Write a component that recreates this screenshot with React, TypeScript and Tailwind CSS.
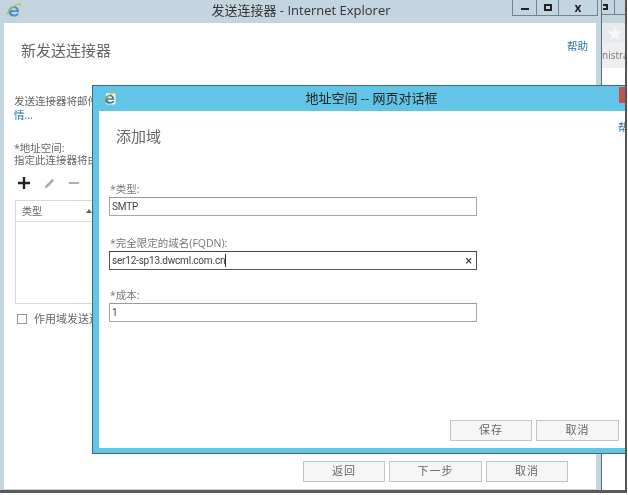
import React from "react";

const cjk = "font-['Open_Sans','Noto_Sans_CJK_SC',sans-serif]";

function IeIcon({ className, white }: { className?: string; white?: boolean }) {
  return (
    <svg viewBox="0 0 20 20" className={className}>
      {white ? <rect x="5" y="3" width="13" height="15" rx="2" fill="#f4f8ec" /> : null}
      <path d="M4 11.5c0-4 3-6.5 6.5-6.5s6 2.5 6 6.8H7.4c.2 2 1.6 3 3.4 3 1.3 0 2.4-.5 3.2-1.4h2.6c-1.100 2.400-3.300 3.700-5.900 3.700-3.800 0-6.700-2.300-6.700-5.600zM7.400 9.800h6.200c-.2-1.700-1.400-2.700-3.100-2.700S7.700 8.100 7.400 9.800z" fill={white ? "#3f7f98" : "#3d93c9"} />
      <path d="M2 15c2-5 8-11 14-13 1.800-.5 2.500.8 1.800 2.500" fill="none" stroke="#c9b64a" strokeWidth="1.400" />
    </svg>
  );
}

function Btn({ label, w }: { label: string; w: string }) {
  return (
    <div className={`${w} h-[21px] flex items-center justify-center border border-[#c4c4c4] bg-[#f6f6f6] text-[11px] tracking-[1px] text-[#666]`}>
      {label}
    </div>
  );
}

function Field({ label, value, dark, children, mt }: { label: string; value: string; dark?: boolean; children?: React.ReactNode; mt: string }) {
  return (
    <div className={mt}>
      <div className="h-[14px] ml-px text-[10.5px] leading-[14px] text-[#777]">{label}</div>
      <div className={`mt-[1px] w-[368px] h-[19px] flex items-center justify-between pl-[2px] pr-[4px] border ${dark ? "border-[#555] border-t-[#444]" : "border-[#a8a8a8] border-t-[#999]"} bg-white font-['Roboto','Noto_Sans_CJK_SC',sans-serif] text-[10px] tracking-[-0.2px] text-[#444]`}>
        <span className="flex items-center">{value}{dark ? <span className="w-px h-[13px] bg-[#333]" /> : null}</span>
        {children}
      </div>
    </div>
  );
}

export default function App() {
  return (
    <div className={`relative w-[628px] h-[495px] overflow-hidden bg-white ${cjk} blur-[0.35px]`}>
      {/* picture frame with its shadow */}
      <div className="relative w-[627px] h-[493px] overflow-hidden bg-white border-b-[3px] border-b-[#5a5a5a] border-r-[2px] border-r-[#555]">
        {/* window behind */}
        <div className="absolute left-[597px] top-0 w-[30px] h-[492px] flex flex-col bg-white">
          <div className="h-[23px] bg-[#c3d5de] flex pl-[5px]">
            <div className="w-[13px] h-[15px] border-r border-b border-[#6f8590] flex items-center">
              <div className="ml-px w-[5px] h-[6px] border-2 border-l-0 border-[#222]" />
            </div>
            <div className="w-[12px] h-[15px] border-b border-[#6f8590]" />
          </div>
          <div className="h-[20px] bg-[#e6eaec] pl-[10px] flex items-center text-[#f8f8f8] text-[16px] leading-none">★</div>
          <div className="h-[25px] bg-[#eeeeee] pl-[5px] text-[10px] leading-[24px] text-[#777] whitespace-nowrap">nistra</div>
          <div className="flex-1 bg-white" />
        </div>

        {/* main IE window */}
        <div className="absolute left-0 top-0 w-[602px] h-[490px] flex flex-col bg-[#c3d5de] border-r border-r-[#5d6d75]">
          <div className="relative h-[23px] shrink-0 flex items-start">
            <IeIcon className="absolute left-[5px] top-[2px] w-[17px] h-[17px]" />
            <div className="w-[512px] pl-[122px] h-[21px] text-center text-[13px] leading-[21px] text-[#333] pr-[32px]">发送连接器 - Internet Explorer</div>
            <div className="flex h-[16px] border border-t-0 border-[#6f8590]">
              <div className="w-[24px] flex items-center justify-center border-r border-[#6f8590]"><div className="w-[8px] h-[2px] mt-[2px] bg-[#222]" /></div>
              <div className="w-[22px] flex items-center justify-center border-r border-[#6f8590]"><div className="w-[8px] h-[7px] border-2 border-[#222]" /></div>
              <div className="w-[38px] flex items-center justify-center text-[12px] font-bold text-[#222] leading-none">x</div>
            </div>
          </div>
          <div className="flex-1 ml-[4px] mr-[5px] mb-[1px] bg-white flex flex-col px-[10px] text-[10.5px] text-[#666]">
            <div className="flex justify-between items-start pt-[16px] h-[66px]">
              <div className="ml-[7px] text-[15px] leading-[22px] text-[#666]">新发送连接器</div>
              <div className="text-[10.500px] leading-[14px] text-[#2c79a8] mr-[-2px]">帮助</div>
            </div>
            <div className="w-[78px] h-[14px] leading-[14px] mt-[5px] whitespace-nowrap overflow-hidden">发送连接器将邮件传递到</div>
            <div className="h-[14px] leading-[14px] text-[#1d6fa5]">情...</div>
            <div className="h-[12px] leading-[12px] mt-[20px] overflow-hidden">*地址空间:</div>
            <div className="w-[78px] h-[12px] leading-[12px] whitespace-nowrap overflow-hidden">指定此连接器将由</div>
            <div className="flex items-center h-[20px] mt-[7px] ml-[3px] gap-[12px]">
              <svg viewBox="0 0 14 14" className="w-[14px] h-[14px]"><path d="M7 1v12M1 7h12" stroke="#222" strokeWidth="2.400" /></svg>
              <svg viewBox="0 0 14 14" className="w-[13px] h-[13px]"><path d="M2 12l1-3 7-7 2 2-7 7z" fill="#aaa" /></svg>
              <svg viewBox="0 0 14 14" className="w-[12px] h-[12px]"><path d="M1 7h12" stroke="#888" strokeWidth="1.600" /></svg>
            </div>
            <div className="w-[100px] h-[104px] mt-[7px] ml-px border border-[#d8d8d8]">
              <div className="h-[21px] w-[77px] flex items-center justify-between border-b border-[#dcdcdc] pl-[6px] pr-[1px] text-[10px]">
                <span>类型</span>
                <svg viewBox="0 0 6 4" className="w-[6px] h-[4px]"><path d="M0 4l3-4 3 4z" fill="#666" /></svg>
              </div>
            </div>
            <div className="flex items-center mt-[7px] ml-[3px] gap-[7px] whitespace-nowrap text-[11px]">
              <div className="w-[10px] h-[10px] border border-[#999]" />
              <span className="w-[58px] overflow-hidden">作用域发送连接器</span>
            </div>
            <div className="flex-1" />
            <div className="flex justify-end gap-[4px] mb-[7px] pr-[18px]">
              <Btn label="返回" w="w-[82px]" />
              <Btn label="下一步" w="w-[93px]" />
              <Btn label="取消" w="w-[82px]" />
            </div>
          </div>
        </div>

        {/* dialog */}
        <div className="absolute left-[92px] top-[85px] w-[540px] h-[369px] flex flex-col bg-[#62c5e6] border border-[#3b6a7c]">
          <div className="relative h-[25px] shrink-0 flex items-center">
            <IeIcon white className="absolute left-[9px] top-[5px] w-[15px] h-[15px]" />
            <div className="w-[557px] shrink-0 text-center text-[13px] text-[#222]">地址空间 -- 网页对话框</div>
            <div className="absolute left-[526px] top-px w-[12px] h-[16px] bg-[#c75050]" />
          </div>
          <div className="flex-1 ml-[6px] mb-[5px] bg-white flex flex-col px-[10px]">
            <div className="pt-[14px] h-[52px]">
              <div className="ml-[7px] text-[15px] leading-[22px] text-[#666]">添加域</div>
            </div>
            <div className="absolute left-[525px] top-[34px] whitespace-nowrap text-[10.500px] leading-[14px] text-[#2c79a8]">帮助</div>
            <Field mt="mt-[19px]" label="*类型:" value="SMTP" />
            <Field mt="mt-[20px]" dark label="*完全限定的域名(FQDN):" value="ser12-sp13.dwcml.com.cn">
              <span className="text-[13px] leading-none text-[#333]">×</span>
            </Field>
            <Field mt="mt-[18px]" label="*成本:" value="1" />
            <div className="flex-1" />
            <div className="flex gap-[4px] ml-[341px] mb-[7px]">
              <Btn label="保存" w="w-[82px]" />
              <Btn label="取消" w="w-[83px]" />
            </div>
          </div>
        </div>
      </div>
    </div>
  );
}
